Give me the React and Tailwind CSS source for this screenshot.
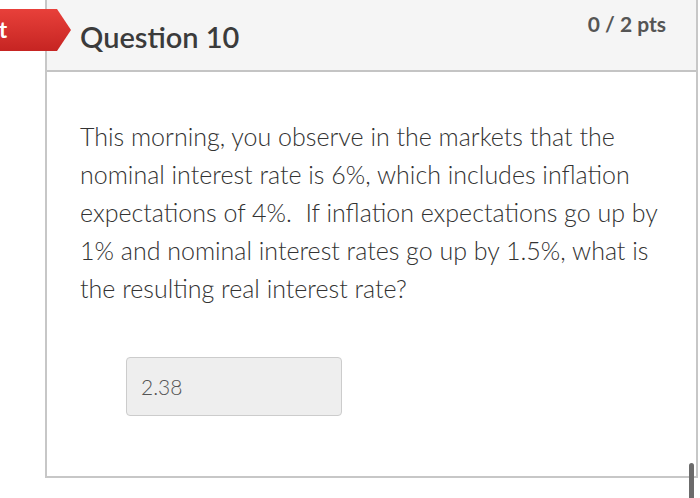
export default function App() {
  return (
    <div className="relative w-[700px] h-[498px] bg-white overflow-hidden font-['Lato','Noto_Sans',sans-serif]">
      <div className="ml-[45px] mr-[2px] h-[478px] border-x-2 border-b-2 border-[#c7c7c7] flex flex-col">
        <div className="h-[72px] bg-[#f5f5f5] border-b-2 border-[#c4c4c4] flex items-start justify-between pl-[33px] pr-[30px]">
          <h2 className="mt-[22px] text-[29px] font-semibold text-[#3b3b3b] leading-none">Question 10</h2>
          <span className="mt-[13px] text-[21px] font-bold text-[#555] leading-none">0 / 2 pts</span>
        </div>
        <div className="pl-[33px] pr-[28px] pt-[45px]">
          <p className="text-[25px] leading-[38px] text-[#333] font-light">
            This morning, you observe in the markets that the nominal interest rate is 6%, which includes inflation expectations of 4%.&nbsp; If inflation expectations go up by 1% and nominal interest rates go up by 1.5%, what is the resulting real interest rate?
          </p>
          <div className="mt-[50px] ml-[46px] w-[216px] h-[59px] bg-[#eeeeee] border border-[#cccccc] rounded-[4px] flex items-center pl-[14px]">
            <span className="text-[21px] text-[#555] font-light">2.38</span>
          </div>
        </div>
      </div>
      <div className="absolute left-0 top-[9px] h-[42px] w-[56px] bg-gradient-to-b from-[#e8403a] to-[#c62422] flex items-center overflow-hidden">
        <span className="text-white text-[22px] font-bold leading-none -ml-[1px]">t</span>
      </div>
      <svg className="absolute left-[55px] top-[9px]" width="16" height="42" viewBox="0 0 16 42">
        <defs>
          <linearGradient id="g" x1="0" y1="0" x2="0" y2="1">
            <stop offset="0" stopColor="#e8403a" />
            <stop offset="1" stopColor="#c62422" />
          </linearGradient>
        </defs>
        <polygon points="0,0 2,0 16,21 2,42 0,42" fill="url(#g)" />
      </svg>
      <div className="absolute left-[689px] top-[463px] w-[5px] h-[40px] bg-[#6b6b6b] rounded-t-sm" />
    </div>
  );
}
